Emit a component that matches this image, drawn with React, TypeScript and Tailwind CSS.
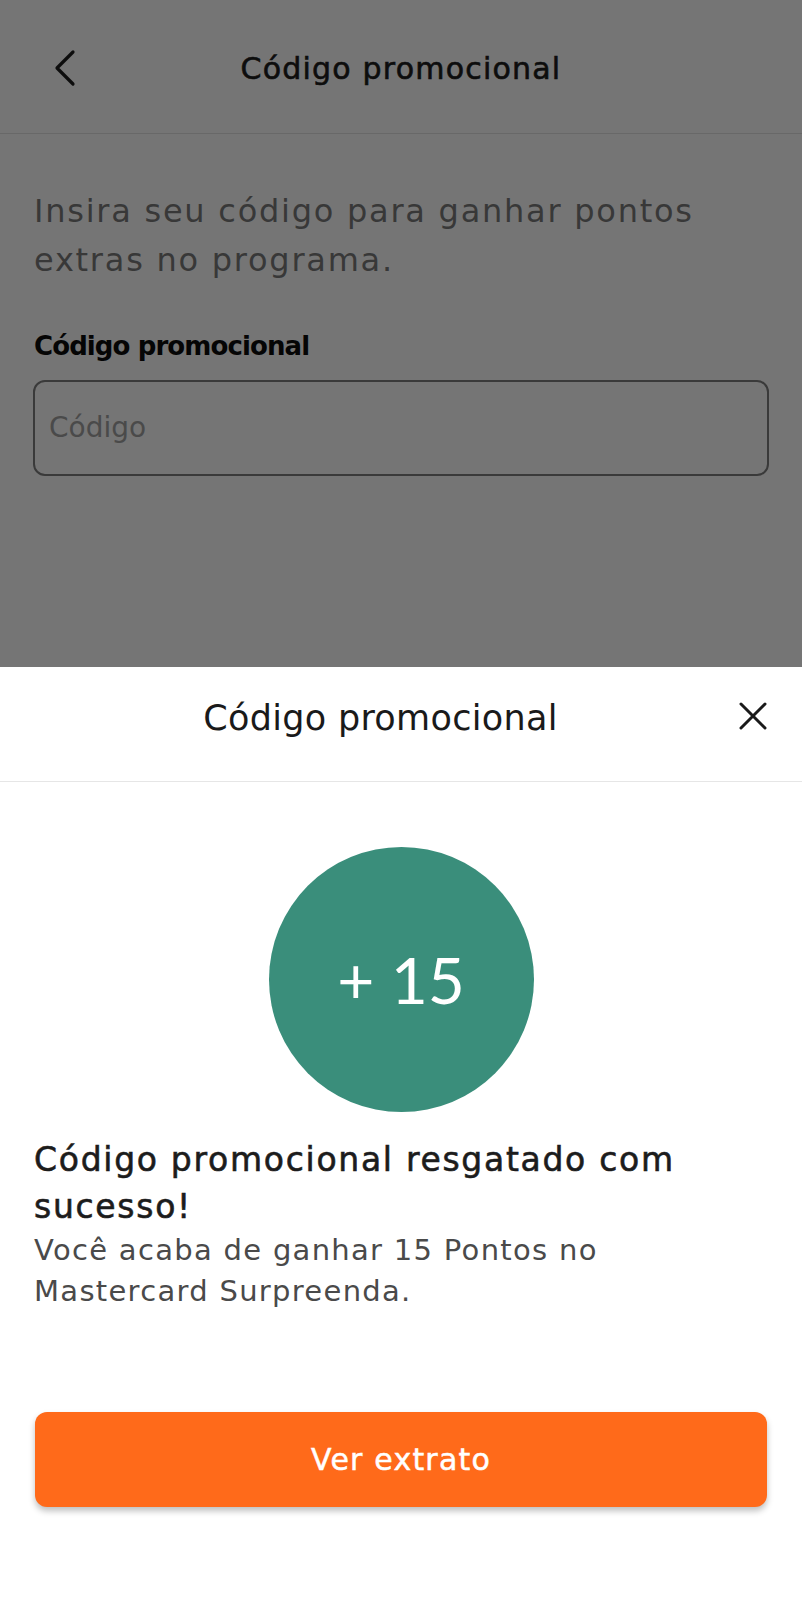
import React from "react";

export default function App() {
  return (
    <div className="w-[802px] h-[1600px] flex flex-col bg-white overflow-hidden" style={{ fontFamily: "'DejaVu Sans', 'Open Sans', sans-serif" }}>
      {/* dimmed page */}
      <div className="h-[667px] shrink-0 bg-[#757575] flex flex-col">
        <div className="h-[134px] shrink-0 relative flex items-center justify-center border-b border-[#686868]">
          <svg className="absolute left-[53px] top-[49px]" width="24" height="38" viewBox="0 0 24 38" fill="none">
            <path d="M20 3 L4 19 L20 35" stroke="#0d0d0d" strokeWidth="3.2" strokeLinecap="round" strokeLinejoin="round" />
          </svg>
          <span className="mt-[4px] text-[30px] tracking-[1.2px] text-[#0d0d0d] [-webkit-text-stroke:0.6px_#0d0d0d]">Código promocional</span>
        </div>
        <div className="px-[34px] pt-[53px] flex flex-col">
          <p className="text-[32px] leading-[49px] tracking-[1.75px] text-[#383838]">
            Insira seu código para ganhar pontos extras no programa.
          </p>
          <div className="mt-[45px] text-[26px] leading-[32px] font-bold tracking-[-0.9px] text-[#050505]">Código promocional</div>
          <div className="mt-[18px] -ml-px w-[736px] h-[96px] rounded-[12px] border-2 border-[#3a3a3a] flex items-center px-[14px]">
            <span className="text-[28px] text-[#4a4a4a]">Código</span>
          </div>
        </div>
      </div>

      {/* bottom sheet */}
      <div className="flex-1 bg-white flex flex-col">
        <div className="h-[115px] shrink-0 relative flex justify-center pt-[29px] pr-[41px] border-b border-[#e6e6e6]">
          <span className="text-[35px] leading-[44px] tracking-[0.3px] text-[#1a1a1a]">Código promocional</span>
          <svg className="absolute left-[738px] top-[34px]" width="30" height="30" viewBox="0 0 30 30" fill="none">
            <path d="M3 3 L27 27 M27 3 L3 27" stroke="#1a1a1a" strokeWidth="3" strokeLinecap="round" />
          </svg>
        </div>
        <div className="flex justify-center pt-[65px]">
          <div className="w-[265px] h-[265px] rounded-full bg-[#3a8e7b] flex items-center justify-center">
            <span className="text-[64px] leading-none font-normal text-white" style={{ fontFamily: "Lato, sans-serif" }}>+ 15</span>
          </div>
        </div>
        <div className="px-[34px] pt-[24px]">
          <h2 className="text-[33px] leading-[47px] tracking-[1.7px] text-[#1c1c1c] [-webkit-text-stroke:0.6px_#1c1c1c]">
            Código promocional resgatado com sucesso!
          </h2>
          <p className="text-[29px] leading-[41px] tracking-[1.3px] text-[#4a4a4a]">
            Você acaba de ganhar 15 Pontos no Mastercard Surpreenda.
          </p>
        </div>
        <div className="px-[35px] mt-[100px]">
          <button className="w-full h-[95px] rounded-[12px] bg-[#ff6a1a] text-white text-[30px] tracking-[1.2px] [-webkit-text-stroke:0.5px_#ffffff] shadow-[0_4px_6px_rgba(0,0,0,0.25)]">
            Ver extrato
          </button>
        </div>
      </div>
    </div>
  );
}
